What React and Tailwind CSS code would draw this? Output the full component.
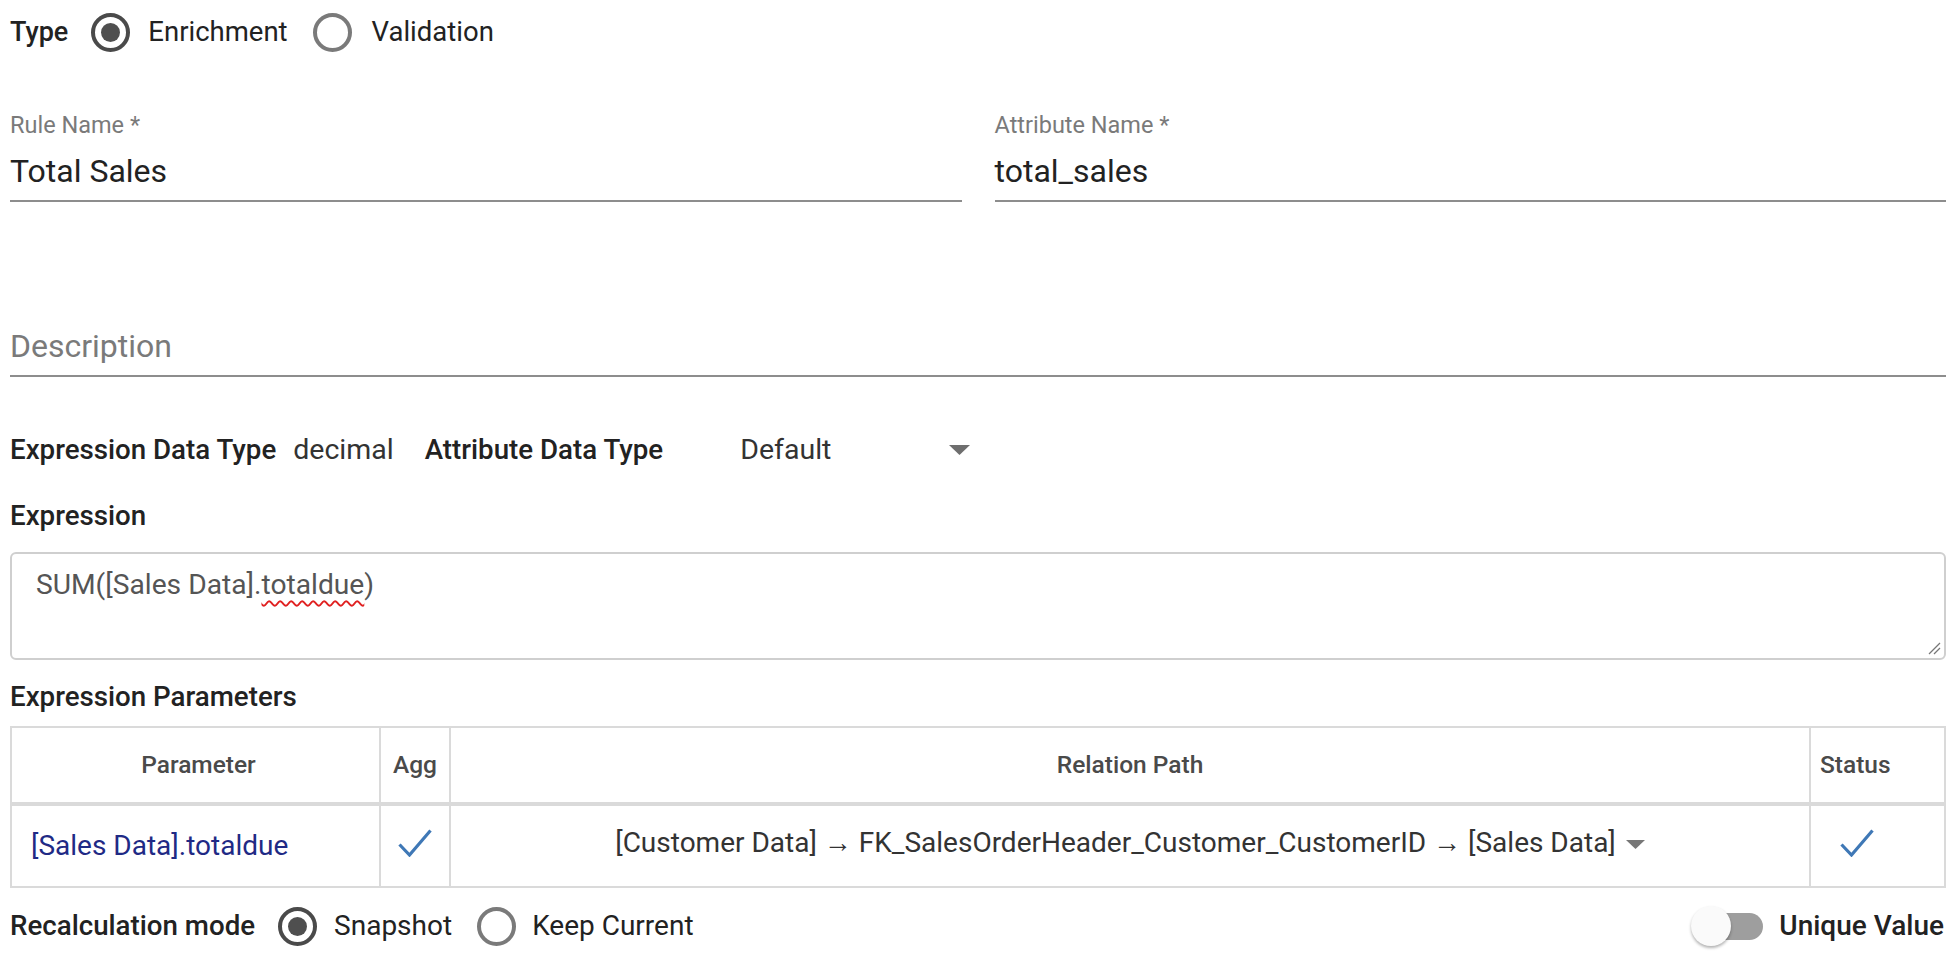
import React from "react";

function Radio({ checked }) {
  return (
    <div
      className={
        "flex h-[39px] w-[39px] shrink-0 items-center justify-center rounded-full border-[4px] " +
        (checked ? "border-[#4a4a4a]" : "border-[#7a7a7a]")
      }
    >
      {checked && <div className="h-[19px] w-[19px] rounded-full bg-[#4f4f4f]" />}
    </div>
  );
}

function Check() {
  return (
    <svg width="34" height="28" viewBox="0 0 34 28" fill="none">
      <path d="M1.5 15.5 L11.5 26 L32.5 1.5" stroke="#3f78b6" strokeWidth="3.2" strokeLinecap="butt" strokeLinejoin="miter" />
    </svg>
  );
}

function Triangle({ w = 20, h = 10, color = "#6b6b6b" }) {
  return (
    <svg width={w} height={h} viewBox={`0 0 ${w} ${h}`}>
      <polygon points={`0,0 ${w},0 ${w / 2},${h}`} fill={color} />
    </svg>
  );
}

function Field({ label, value }) {
  return (
    <div className="flex flex-col border-b-2 border-[#8d8d8d] pb-[10px]">
      <div className="h-[28px] text-[23.5px] leading-[28px] text-[#7a7a7a]">{label}</div>
      <div className="mt-[13px] h-[38px] text-[32px] leading-[38px] text-[#222]">{value}</div>
    </div>
  );
}

export default function App() {
  return (
    <div className="min-h-[960px] w-full bg-white px-[10px] font-['Roboto','Liberation_Sans',sans-serif] text-[#222]">
      {/* Type row */}
      <div className="flex h-[64px] items-center">
        <span className="text-[27px] font-medium text-[#222]">Type</span>
        <div className="ml-[23px]">
          <Radio checked />
        </div>
        <span className="ml-[18px] text-[27.5px] text-[#222]">Enrichment</span>
        <div className="ml-[25px]">
          <Radio />
        </div>
        <span className="ml-[20px] text-[27.5px] text-[#222]">Validation</span>
      </div>

      {/* Rule name / Attribute name */}
      <div className="mt-[47px] grid grid-cols-2 gap-x-[33px]">
        <Field label="Rule Name *" value="Total Sales" />
        <Field label="Attribute Name *" value="total_sales" />
      </div>

      {/* Description */}
      <div className="mt-[125px] border-b-2 border-[#8d8d8d] pb-[10px]">
        <div className="h-[38px] text-[32px] leading-[38px] text-[#7a7a7a]">Description</div>
      </div>

      {/* Data types row */}
      <div className="mt-[57px] flex h-[32px] items-center">
        <span className="text-[27.7px] font-medium text-[#222]">Expression Data Type</span>
        <span className="ml-[17px] text-[28.5px] text-[#333]">decimal</span>
        <span className="ml-[31px] text-[27.7px] font-medium text-[#222]">Attribute Data Type</span>
        <div className="ml-[77px] flex w-[235px] items-center justify-between pr-[5px]">
          <span className="text-[28.5px] text-[#333]">Default</span>
          <Triangle w={21} h={10} color="#6e6e6e" />
        </div>
      </div>

      {/* Expression */}
      <div className="mt-[34px] h-[32px] text-[27.7px] font-medium leading-[32px] text-[#222]">Expression</div>
      <div className="relative mt-[20px] h-[108px] rounded-[6px] border-2 border-[#cfcfcf] pl-[24px] pt-[13px]">
        <span className="text-[28.2px] leading-[36px] text-[#555]">
          SUM([Sales Data].
          <span className="underline decoration-[#e02020] decoration-wavy decoration-[2px] underline-offset-[6px]">totaldue</span>)
        </span>
        <svg className="absolute bottom-[3px] right-[3px]" width="14" height="14" viewBox="0 0 14 14">
          <line x1="13" y1="2" x2="2" y2="13" stroke="#777" strokeWidth="1.3" />
          <line x1="13" y1="7" x2="7" y2="13" stroke="#777" strokeWidth="1.3" />
        </svg>
      </div>

      {/* Expression Parameters */}
      <div className="mt-[21px] h-[32px] text-[27.7px] font-medium leading-[32px] text-[#222]">Expression Parameters</div>
      <div className="mt-[13px] border-2 border-[#dadada]">
        <div className="grid h-[78px] grid-cols-[369px_70px_1fr_133px] border-b-[4px] border-[#dadada] text-[24.5px] font-medium text-[#4a4a4a]">
          <div className="flex items-center justify-center border-r-2 border-[#dadada] pl-[6px]">Parameter</div>
          <div className="flex items-center justify-center border-r-2 border-[#dadada]">Agg</div>
          <div className="flex items-center justify-center border-r-2 border-[#dadada]">Relation Path</div>
          <div className="flex items-center pl-[9px]">Status</div>
        </div>
        <div className="grid h-[80px] grid-cols-[369px_70px_1fr_133px] text-[28px]">
          <div className="flex items-center border-r-2 border-[#dadada] pl-[19px] text-[#1f2a85]">[Sales Data].totaldue</div>
          <div className="flex items-center justify-center border-r-2 border-[#dadada] pb-[6px]">
            <Check />
          </div>
          <div className="flex items-center justify-center border-r-2 border-[#dadada] pb-[6px] text-[#333]">
            <span>[Customer Data] → FK_SalesOrderHeader_Customer_CustomerID → [Sales Data]</span>
            <span className="ml-[10px] mt-[2px]">
              <Triangle w={19} h={9} color="#777" />
            </span>
          </div>
          <div className="flex items-center pb-[6px] pl-[29px]">
            <Check />
          </div>
        </div>
      </div>

      {/* Bottom row */}
      <div className="flex h-[76px] items-center justify-between">
        <div className="flex items-center">
          <span className="text-[27.7px] font-medium text-[#222]">Recalculation mode</span>
          <div className="ml-[23px]">
            <Radio checked />
          </div>
          <span className="ml-[17px] text-[28px] text-[#222]">Snapshot</span>
          <div className="ml-[25px]">
            <Radio />
          </div>
          <span className="ml-[16px] text-[28px] text-[#222]">Keep Current</span>
        </div>
        <div className="flex items-center pr-[2px]">
          <div className="relative h-[40px] w-[72px]">
            <div className="absolute left-[8px] right-0 top-[7px] h-[27px] rounded-full bg-[#9e9e9e]" />
            <div className="absolute left-0 top-0 h-[40px] w-[40px] rounded-full bg-[#fafafa] shadow-[0_2px_3px_rgba(0,0,0,0.3)]" />
          </div>
          <span className="ml-[16px] text-[28px] font-medium text-[#222]">Unique Value</span>
        </div>
      </div>
    </div>
  );
}
